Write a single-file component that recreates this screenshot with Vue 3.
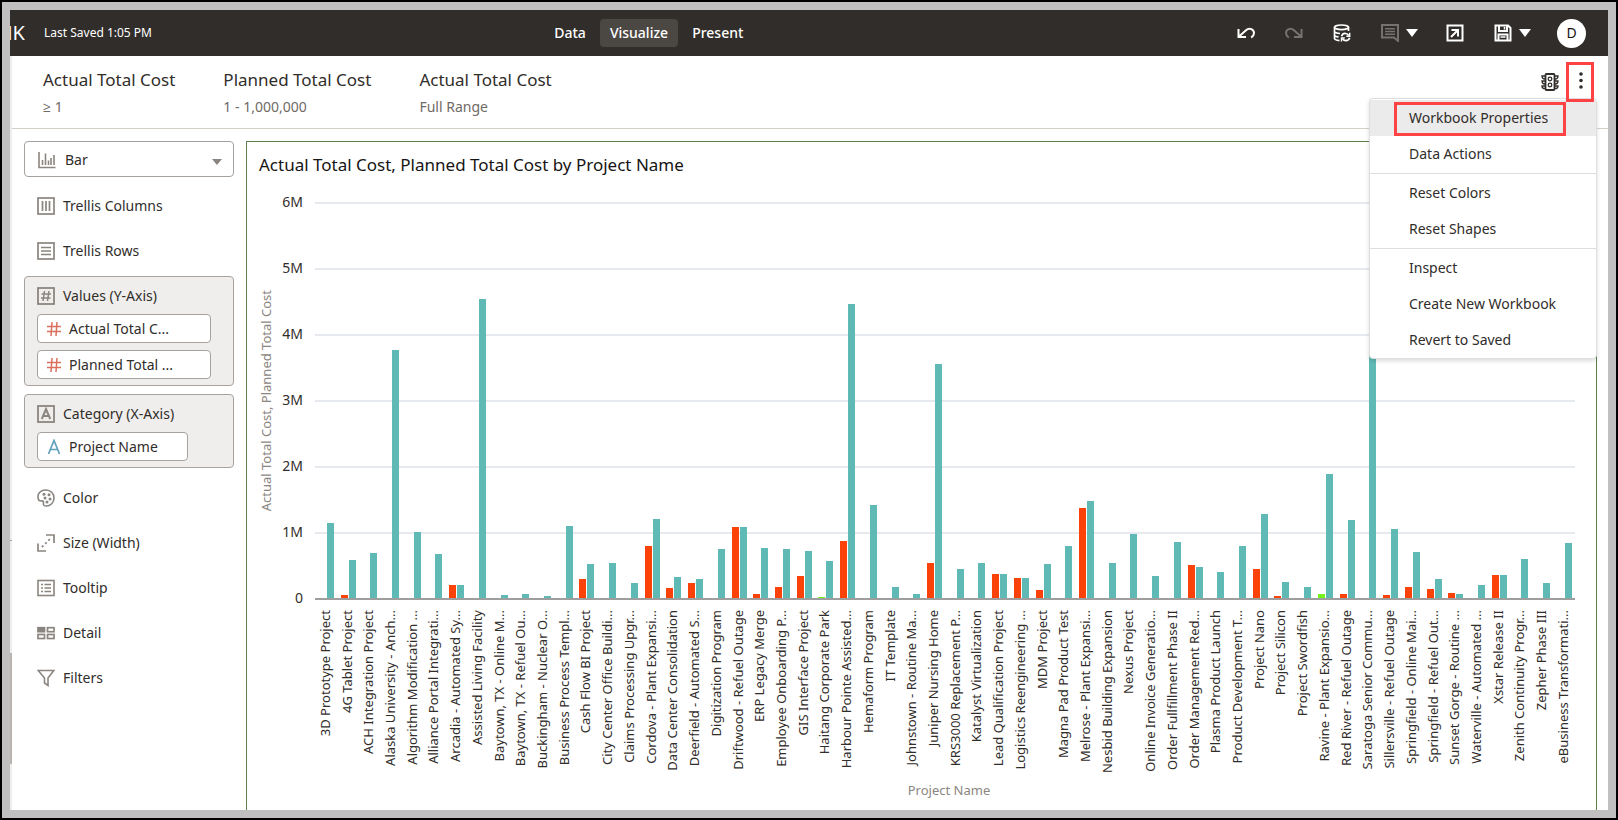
<script setup>
import { ref } from 'vue'

const tabs = ['Data', 'Visualize', 'Present']
const activeTab = ref('Visualize')

const filters = [
  { name: 'Actual Total Cost', range: '≥ 1' },
  { name: 'Planned Total Cost', range: '1 - 1,000,000' },
  { name: 'Actual Total Cost', range: 'Full Range' },
]

const menuGroups = [
  ['Workbook Properties', 'Data Actions'],
  ['Reset Colors', 'Reset Shapes'],
  ['Inspect', 'Create New Workbook', 'Revert to Saved'],
]

const axisTicks = ['6M', '5M', '4M', '3M', '2M', '1M', '0']
const axisMax = 6

// [label, actual cost (M), planned cost (M), actual bar is highlighted green]
const projects = [
  ['3D Prototype Project', 0, 1.152],
  ['4G Tablet Project', 0.06, 0.59],
  ['ACH Integration Project', 0, 0.697],
  ['Alaska University - Anch...', 0, 3.77],
  ['Algorithm Modification ...', 0, 1.01],
  ['Alliance Portal Integrati...', 0, 0.677],
  ['Arcadia - Automated Sy...', 0.212, 0.212],
  ['Assisted Living Facility', 0, 4.54],
  ['Baytown, TX - Online M...', 0, 0.06],
  ['Baytown, TX - Refuel Ou...', 0, 0.07],
  ['Buckingham - Nuclear O...', 0, 0.04],
  ['Business Process Templ...', 0, 1.106],
  ['Cash Flow BI Project', 0.3, 0.525],
  ['City Center Office Buildi...', 0, 0.545],
  ['Claims Processing Upgr...', 0, 0.242],
  ['Cordova - Plant Expansi...', 0.803, 1.212],
  ['Data Center Consolidation', 0.167, 0.328],
  ['Deerfield - Automated S...', 0.242, 0.298],
  ['Digitization Program', 0, 0.753],
  ['Driftwood - Refuel Outage', 1.086, 1.086],
  ['ERP Legacy Merge', 0.08, 0.773],
  ['Employee Onboarding P...', 0.18, 0.753],
  ['GIS Interface Project', 0.348, 0.722],
  ['Haitang Corporate Park', 0.03, 0.576, true],
  ['Harbour Pointe Assisted...', 0.879, 4.46],
  ['Hemaform Program', 0, 1.424],
  ['IT Template', 0, 0.177],
  ['Johnstown - Routine Ma...', 0, 0.07],
  ['Juniper Nursing Home', 0.545, 3.556],
  ['KRS3000 Replacement P...', 0, 0.455],
  ['Katalyst Virtualization', 0, 0.545],
  ['Lead Qualification Project', 0.384, 0.384],
  ['Logistics Reengineering ...', 0.313, 0.313],
  ['MDM Project', 0.136, 0.53],
  ['Magna Pad Product Test', 0, 0.803],
  ['Melrose - Plant Expansi...', 1.379, 1.48],
  ['Nesbid Building Expansion', 0, 0.545],
  ['Nexus Project', 0, 0.985],
  ['Online Invoice Generatio...', 0, 0.348],
  ['Order Fullfillment Phase II', 0, 0.859],
  ['Order Management Red...', 0.515, 0.485],
  ['Plasma Product Launch', 0, 0.41],
  ['Product Development T...', 0, 0.803],
  ['Project Nano', 0.455, 1.288],
  ['Project Silicon', 0.045, 0.258],
  ['Project Swordfish', 0, 0.182],
  ['Ravine - Plant Expansio...', 0.08, 1.89, true],
  ['Red River - Refuel Outage', 0.08, 1.19],
  ['Saratoga Senior Commu...', 0, 3.9],
  ['Sillersville - Refuel Outage', 0.06, 1.056],
  ['Springfield - Online Mai...', 0.177, 0.717],
  ['Springfield - Refuel Out...', 0.15, 0.303],
  ['Sunset Gorge - Routine ...', 0.086, 0.08],
  ['Waterville - Automated ...', 0, 0.212],
  ['Xstar Release II', 0.364, 0.364],
  ['Zenith Continuity Progr...', 0, 0.606],
  ['Zepher Phase III', 0, 0.242],
  ['eBusiness Transformati...', 0, 0.848],
].map(([label, actual, planned, green]) => ({ label, actual, planned, green }))

const barStyle = (value) => ({ height: (value / axisMax) * 100 + '%' })
</script>

<template>
  <div class="frame">
    <header class="topbar">
      <div class="topbar-left">
        <div class="title"><span>NK</span></div>
        <span class="saved">Last Saved 1:05 PM</span>
      </div>
      <nav class="tabs">
        <button v-for="t in tabs" :key="t" type="button" :class="['tab', { active: t === activeTab }]" @click="activeTab = t">{{ t }}</button>
      </nav>
      <div class="tools">
        <div class="tools-edit">
          <button type="button" class="icon-btn" aria-label="Undo">
            <svg width="18" height="18" viewBox="0 0 18 18" fill="none" stroke="#fff" stroke-width="2"><path d="M1.500 5v8H9M2 12.500 9 6.200C12.500 3 17 5.500 17 9c0 2-1.200 3.500-2.800 4.600" /></svg>
          </button>
          <button type="button" class="icon-btn" aria-label="Redo">
            <svg width="18" height="18" viewBox="0 0 18 18" fill="none" stroke="#76726f" stroke-width="2"><path d="M16.500 5v8H9M16 12.500 9 6.200C5.500 3 1 5.500 1 9c0 2 1.200 3.500 2.800 4.600" /></svg>
          </button>
          <button type="button" class="icon-btn" aria-label="Refresh data">
            <svg width="18" height="18" viewBox="0 0 18 18" fill="none" stroke="#fff" stroke-width="1.700"><ellipse cx="8.500" cy="3.300" rx="7" ry="2.300" /><path d="M1.500 3.300v11c0 1.200 2 2 5 2.300M15.500 3.300V7M1.500 7.300c0 1.300 2.500 2 5.500 2.200M1.500 10.900c0 1.200 2 1.800 4 2" /><path d="M8.600 12.200c.6-2 2.300-2.900 4-2.700 1.500.2 2.600 1 3.200 2.200M16.700 13.800c-.6 1.800-2 2.800-3.800 2.800-1.600 0-2.900-.9-3.500-2.200" /><path d="M16.700 8.800v3.400h-3.400M8.500 17.500v-3.600h3.400" stroke-width="1.400" /></svg>
          </button>
        </div>
        <button type="button" class="icon-btn with-caret" aria-label="Comments">
          <svg width="18" height="18" viewBox="0 0 18 18"><path d="M1 1h16v16l-4-3.500H1z" fill="none" stroke="#76726f" stroke-width="2" /><path d="M4 4.700h10M4 7.500h10M4 10.300h10" stroke="#76726f" stroke-width="1.500" /></svg>
          <svg width="12" height="8" viewBox="0 0 12 8"><path d="M0 0h12L6 8z" fill="#fff" /></svg>
        </button>
        <button type="button" class="icon-btn" aria-label="Export">
          <svg width="18" height="18" viewBox="0 0 18 18" fill="none" stroke="#fff" stroke-width="2"><path d="M1.500 1.500h15v15h-15zM5.500 6h6.500v6.500M11.500 6.500 5 13" /></svg>
        </button>
        <button type="button" class="icon-btn with-caret save" aria-label="Save">
          <svg width="18" height="18" viewBox="0 0 18 18" fill="none" stroke="#fff" stroke-width="2"><path d="M1.500 1.500H14L16.500 4v12.500h-15zM5 1.500V7h8V1.500M4.500 16.500v-6h9v6" /><path d="M10.500 3v2.500M6.500 13h5" stroke-width="1.500" /></svg>
          <svg width="12" height="8" viewBox="0 0 12 8"><path d="M0 0h12L6 8z" fill="#fff" /></svg>
        </button>
        <button type="button" class="avatar">D</button>
      </div>
    </header>

    <section class="filterbar">
      <div v-for="(f, i) in filters" :key="i" class="filter">
        <div class="filter-name">{{ f.name }}</div>
        <div class="filter-range">{{ f.range }}</div>
      </div>
      <div class="filter-tools">
        <button type="button" class="icon-btn" aria-label="Filter controls">
          <svg width="18" height="18" viewBox="0 0 18 18" fill="none" stroke="#312d2a"><rect x="4.500" y="1" width="9" height="16" rx="1" stroke-width="1.800" /><circle cx="9" cy="6" r="1.800" stroke-width="1.300" /><circle cx="9" cy="12" r="1.800" stroke-width="1.300" /><path d="M4 3H1c0 2 1.200 3 3 3M4 8H1c0 2 1.200 3 3 3M4 13H1c0 2 1.200 2.700 3 2.700M14 3h3c0 2-1.200 3-3 3M14 8h3c0 2-1.200 3-3 3M14 13h3c0 2-1.200 2.700-3 2.700" stroke-width="1.300" /></svg>
        </button>
        <button type="button" class="more" aria-label="Menu">
          <svg width="4" height="17" viewBox="0 0 4 17" fill="#312d2a"><circle cx="2" cy="2" r="1.800" /><circle cx="2" cy="8.500" r="1.800" /><circle cx="2" cy="15" r="1.800" /></svg>
        </button>
      </div>
      <div class="menu" role="menu">
        <div v-for="(g, gi) in menuGroups" :key="gi" class="menu-group">
          <button v-for="(m, mi) in g" :key="m" type="button" role="menuitem" :class="['menu-item', { hot: gi + mi === 0 }]">{{ m }}</button>
        </div>
      </div>
    </section>

    <main class="work">
      <div class="rail"><span class="rail-tick"></span><span class="rail-thumb"></span></div>
      <aside class="grammar">
        <button type="button" class="viz-type">
          <svg width="18" height="18" viewBox="0 0 18 18" fill="none" stroke="#8b8580" stroke-width="1.600"><path d="M1 1v15.500h16.500M4.500 14V9M7.500 14V2.500M10.500 14V9.500M13 14V7M16 14V4" /></svg>
          <span>Bar</span>
          <svg class="caret" width="10" height="6" viewBox="0 0 10 6"><path d="M0 0h10L5 6z" fill="#8b8580" /></svg>
        </button>
        <div class="edges trellis">
          <div class="edge">
            <svg width="18" height="18" viewBox="0 0 18 18" fill="none" stroke="#8b8580" stroke-width="1.700"><rect x="1" y="1" width="16" height="16" /><path d="M5.500 4v10M9 4v10M12.500 4v10" /></svg>
            Trellis Columns
          </div>
          <div class="edge">
            <svg width="18" height="18" viewBox="0 0 18 18" fill="none" stroke="#8b8580" stroke-width="1.700"><rect x="1" y="1" width="16" height="16" /><path d="M4 5.500h10M4 9h10M4 12.500h10" /></svg>
            Trellis Rows
          </div>
        </div>
        <div class="drop">
          <div class="drop-label">
            <svg width="18" height="18" viewBox="0 0 18 18" fill="none" stroke="#8b8580" stroke-width="1.800"><rect x="1" y="1" width="16" height="16" /><path d="M7.500 4 6 14M12 4l-1.500 10M4.500 7h9.500M4 11h9.500" stroke-width="1.500" /></svg>
            Values (Y-Axis)
          </div>
          <button type="button" class="pill">
            <svg width="16" height="16" viewBox="0 0 16 16" fill="none" stroke="#dc7060" stroke-width="1.500"><path d="M6 1 5 15M11 1l-1 14M1 5.500h14M1 10.500h14" /></svg>
            Actual Total C...
          </button>
          <button type="button" class="pill">
            <svg width="16" height="16" viewBox="0 0 16 16" fill="none" stroke="#dc7060" stroke-width="1.500"><path d="M6 1 5 15M11 1l-1 14M1 5.500h14M1 10.500h14" /></svg>
            Planned Total ...
          </button>
        </div>
        <div class="drop">
          <div class="drop-label">
            <svg width="18" height="18" viewBox="0 0 18 18" fill="none" stroke="#8b8580" stroke-width="1.800"><rect x="1" y="1" width="16" height="16" /><path d="M4.800 14 9 4l4.200 10M6 11h6" stroke-width="2" /></svg>
            Category (X-Axis)
          </div>
          <button type="button" class="pill short">
            <svg width="16" height="16" viewBox="0 0 16 16" fill="none" stroke="#5fa2ba" stroke-width="1.700"><path d="M2.500 15 8 1.500 13.500 15M4.300 10.500h7.400" /></svg>
            Project Name
          </button>
        </div>
        <div class="edges">
          <div class="edge">
            <svg width="18" height="18" viewBox="0 0 18 18"><path d="M1.200 5.600C2.600 2.800 5.500 1 9 1c4.600 0 8 3.400 8 8s-3.400 8-7.800 8c-2 0-3.200-1-2.800-2.700.4-1.500 0-2.500-1.600-2.400-1.700.2-3.300-.4-3.600-2.200-.2-1.200-.3-2.600 0-4.100z" fill="none" stroke="#8b8580" stroke-width="1.600" /><g fill="#8b8580"><circle cx="7" cy="5.300" r="1.500" /><circle cx="12" cy="5.800" r="1.500" /><circle cx="8" cy="9" r="1.500" /><circle cx="13" cy="10" r="1.500" /><circle cx="10" cy="13" r="1.500" /></g></svg>
            Color
          </div>
          <div class="edge">
            <svg width="18" height="18" viewBox="0 0 18 18" fill="none" stroke="#8b8580" stroke-width="1.700"><path d="M9 1h8v8M1 9.500V17h8" /><path d="M5 13 14 4" stroke-width="1.800" stroke-dasharray="2 2.500" /></svg>
            Size (Width)
          </div>
          <div class="edge">
            <svg width="18" height="18" viewBox="0 0 18 18" fill="none" stroke="#8b8580" stroke-width="1.600"><rect x="1" y="1.500" width="16" height="15" /><path d="M4 5.500h2M4 9h2M4 12.500h2M7.500 5.500H14M7.500 9H14M7.500 12.500H14" /></svg>
            Tooltip
          </div>
          <div class="edge">
            <svg width="18" height="18" viewBox="0 0 18 18" fill="none" stroke="#8b8580" stroke-width="1.700"><rect x="1" y="3.700" width="6.500" height="4" fill="#8b8580" /><rect x="10.500" y="3.700" width="6.500" height="4" /><rect x="1" y="10.500" width="6.500" height="4" /><rect x="10.500" y="10.500" width="6.500" height="4" /></svg>
            Detail
          </div>
          <div class="edge">
            <svg width="18" height="18" viewBox="0 0 18 18" fill="none" stroke="#8b8580" stroke-width="1.600"><path d="M1.200 1.500h15.600L11 9v7.500L7.500 14V9z" /></svg>
            Filters
          </div>
        </div>
      </aside>

      <section class="chart">
        <h2>Actual Total Cost, Planned Total Cost by Project Name</h2>
        <div class="y-title"><span>Actual Total Cost, Planned Total Cost</span></div>
        <div class="y-ticks"><span v-for="t in axisTicks" :key="t">{{ t }}</span></div>
        <div class="plot">
          <div class="grid"><i v-for="t in axisTicks" :key="t"></i></div>
          <div class="bars">
            <div v-for="p in projects" :key="p.label" class="slot">
              <div :class="['bar', 'actual', { green: p.green }]" :style="barStyle(p.actual)"></div>
              <div class="bar planned" :style="barStyle(p.planned)"></div>
            </div>
          </div>
        </div>
        <div class="x-labels">
          <div v-for="p in projects" :key="p.label" class="x-label"><span>{{ p.label }}</span></div>
        </div>
        <div class="x-title">Project Name</div>
      </section>
    </main>
  </div>
</template>

<style>
html,
body,
#app {
  height: 100%;
}
</style>

<style scoped>
.frame,
.frame * {
  box-sizing: border-box;
}
.frame {
  display: flex;
  flex-direction: column;
  height: 100%;
  padding: 8px;
  border: 2px solid #000;
  background: #c0c0c0;
  color: #312d2a;
  font-family: "Noto Sans", "Open Sans", sans-serif;
  font-size: 14px;
  line-height: 20px;
  overflow: hidden;
}
button {
  margin: 0;
  padding: 0;
  border: 0;
  background: none;
  color: inherit;
  font: inherit;
  cursor: pointer;
}
svg {
  display: block;
  flex: none;
}

.topbar {
  display: flex;
  align-items: center;
  flex: none;
  height: 46px;
  padding-right: 22px;
  background: #312d2a;
  color: #fff;
}
.topbar-left {
  display: flex;
  align-items: center;
  gap: 19px;
  width: 33.9%;
}
.title {
  display: flex;
  justify-content: flex-end;
  width: 15px;
  overflow: hidden;
  font-size: 20px;
  line-height: 28px;
}
.saved {
  font-size: 12px;
}
.tabs {
  display: flex;
  gap: 4px;
}
.tab {
  height: 28px;
  padding: 0 10px;
  border-radius: 4px;
  font-weight: 500;
}
.tab.active {
  background: #4b4743;
}
.tools {
  display: flex;
  align-items: center;
  gap: 28px;
  margin-left: auto;
}
.tools-edit {
  display: flex;
  gap: 30px;
  margin-right: 2px;
}
.with-caret {
  display: flex;
  align-items: center;
  gap: 7px;
}
.save {
  margin: 0 -2px 0 2px;
}
.avatar {
  width: 29px;
  height: 29px;
  border-radius: 50%;
  background: #fff;
  color: #161513;
}

.filterbar {
  position: relative;
  display: flex;
  flex: none;
  gap: 48px;
  height: 73px;
  padding: 12px 14px 0 33px;
  border-bottom: 1px solid #d4cfc8;
  background: #fff;
}
.filter-name {
  font-size: 17px;
  line-height: 24px;
}
.filter-range {
  margin-top: 4px;
  line-height: 22px;
  color: #6f6a66;
}
.filter-tools {
  display: flex;
  align-items: center;
  gap: 7px;
  height: 40px;
  margin: -6px 0 0 auto;
}
.more {
  position: relative;
  z-index: 3;
  display: flex;
  align-items: center;
  justify-content: center;
  width: 28px;
  height: 40px;
  padding: 0 0 3px 2px;
  border: 3px solid #fd4343;
}
.menu {
  position: absolute;
  z-index: 2;
  top: 42px;
  right: 11px;
  width: 228px;
  padding-top: 1px;
  border: 1px solid #dedede;
  border-radius: 4px;
  background: #fff;
  box-shadow: 0 2px 4px rgba(0, 0, 0, 0.14);
}
.menu-group + .menu-group {
  margin-top: 1px;
  padding-top: 1px;
  border-top: 1px solid #dedede;
}
.menu-item {
  position: relative;
  display: block;
  width: 100%;
  height: 36px;
  padding-left: 39px;
  text-align: left;
}
.menu-item.hot {
  background: #ebebeb;
}
.menu-item.hot::after {
  content: "";
  position: absolute;
  inset: 2px 30px 0 24px;
  border: 3px solid #fd4343;
}

.work {
  display: flex;
  flex: 1;
  min-height: 0;
  background: #fff;
}
.rail {
  z-index: 1;
  display: flex;
  flex-direction: column;
  width: 2px;
  margin-top: -73px;
  background: #ededed;
}
.rail-tick {
  height: 1px;
  margin-top: 484px;
  background: #a8a29e;
}
.rail-thumb {
  height: 111px;
  margin-top: 112px;
  background: #b9b2ad;
}
.grammar {
  width: 222px;
  flex: none;
  padding: 12px 0 0 12px;
}
.viz-type {
  display: flex;
  align-items: center;
  gap: 9px;
  width: 210px;
  height: 36px;
  padding: 1px 11px 0 13px;
  border: 1px solid #a8a29e;
  border-radius: 4px;
}
.caret {
  margin: 4px 0 0 auto;
}
.edges {
  padding: 7px 0 0 13px;
}
.edges.trellis {
  padding: 6px 0 3px 13px;
}
.edge {
  display: flex;
  align-items: center;
  gap: 8px;
  height: 45px;
}
.drop {
  display: flex;
  flex-direction: column;
  gap: 7px;
  width: 210px;
  padding: 0 12px 6px;
  border: 1px solid #a8a29e;
  border-radius: 4px;
  background: #f0eeec;
}
.drop + .drop {
  margin-top: 8px;
}
.drop-label {
  display: flex;
  align-items: center;
  gap: 8px;
  height: 37px;
  margin-bottom: -7px;
}
.pill {
  display: flex;
  align-items: center;
  gap: 7px;
  width: 174px;
  height: 29px;
  padding-left: 8px;
  border: 1px solid #a8a29e;
  border-radius: 4px;
  background: #fff;
}
.pill.short {
  width: 151px;
}

.chart {
  display: grid;
  grid-template-columns: 20px 27px minmax(0, 1fr);
  grid-template-rows: 60px minmax(0, 1fr) auto auto;
  flex: 1;
  min-width: 0;
  margin: 12px 11px 0 12px;
  padding: 0 21px 10px 9px;
  border: 1px solid #5f8050;
  border-bottom: 0;
}
h2 {
  grid-column: 1 / -1;
  margin: 11px 0 0 3px;
  color: #161513;
  font-size: 17px;
  font-weight: 400;
  line-height: 24px;
}
.y-title {
  display: flex;
  align-items: center;
  justify-content: center;
  color: #8b8680;
  font-size: 13px;
  white-space: nowrap;
}
.y-title span,
.x-label span {
  writing-mode: vertical-rl;
  transform: rotate(180deg);
}
.y-ticks,
.grid {
  display: flex;
  flex-direction: column;
  justify-content: space-between;
}
.y-ticks span {
  height: 2px;
  line-height: 0;
  text-align: right;
}
.plot {
  position: relative;
  margin-left: 12px;
}
.plot::after {
  content: "";
  position: absolute;
  inset: auto 0 0;
  height: 2px;
  background: #9e9e9e;
}
.grid {
  height: 100%;
}
.grid i {
  height: 2px;
  background: #e6e9ee;
}
.bars {
  position: absolute;
  inset: 0 0 1px;
  display: flex;
}
.slot {
  display: flex;
  flex: 1;
  align-items: flex-end;
  justify-content: center;
  gap: 1px;
  min-width: 0;
  padding-left: 1px;
}
.bar {
  width: 7px;
}
.actual {
  background: #fa4209;
}
.actual.green {
  background: #72f51b;
}
.planned {
  background: #5fb9b5;
}
.x-labels {
  display: flex;
  grid-column: 3;
  height: 176px;
  margin: 0 1px 0 11px;
  padding-top: 10px;
}
.x-label {
  display: flex;
  flex: 1;
  align-items: flex-start;
  justify-content: center;
  min-width: 0;
  font-size: 13px;
  line-height: 18px;
  white-space: nowrap;
}
.x-title {
  grid-column: 3;
  margin: 4px 0 0 20px;
  color: #8b8680;
  font-size: 13px;
  text-align: center;
}
</style>
